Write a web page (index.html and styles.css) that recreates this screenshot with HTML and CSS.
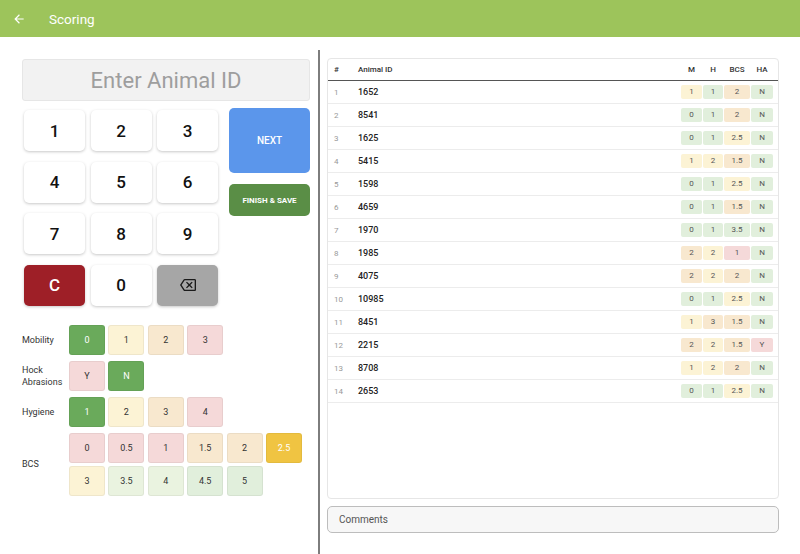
FILE: index.html
```html
<!DOCTYPE html>
<html lang="en">

<head>
    <meta charset="UTF-8">
    <meta name="viewport" content="width=device-width, initial-scale=1.0">
    <title>Scoring</title>
    <link rel="stylesheet" href="styles.css">
</head>

<body>
    <header class="appbar">
        <svg class="appbar-back" viewBox="0 0 24 24"><path d="M20 11H7.83l5.59-5.59L12 4l-8 8 8 8 1.41-1.41L7.83 13H20v-2z"/></svg>
        <span class="appbar-title">Scoring</span>
    </header>

    <div class="main">
        <!-- left : id entry + scores -->
        <section class="entry">
            <div class="id-input">Enter Animal ID</div>

            <div class="keypad">
                <div class="digits">
                    <button class="key">1</button>
                    <button class="key">2</button>
                    <button class="key">3</button>
                    <button class="key">4</button>
                    <button class="key">5</button>
                    <button class="key">6</button>
                    <button class="key">7</button>
                    <button class="key">8</button>
                    <button class="key">9</button>
                    <button class="key key-clear">C</button>
                    <button class="key">0</button>
                    <button class="key key-back">
                        <svg viewBox="0 0 24 24"><path d="M22 3H7c-.69 0-1.23.35-1.59.88L0 12l5.41 8.11c.36.53.9.89 1.59.89h15c1.1 0 2-.9 2-2V5c0-1.1-.9-2-2-2zm0 16H7.07L2.4 12l4.66-7H22v14zm-11.590-2L14 13.41 17.59 17 19 15.59 15.41 12 19 8.41 17.59 7 14 10.59 10.41 7 9 8.41 12.59 12 9 15.59z"/></svg>
                    </button>
                </div>
                <div class="actions">
                    <button class="btn-next">NEXT</button>
                    <button class="btn-finish">FINISH &amp; SAVE</button>
                </div>
            </div>

            <div class="scores">
                <div class="score-row">
                    <div class="score-label">Mobility</div>
                    <div class="opts">
                        <span class="opt sel-green">0</span>
                        <span class="opt c-yellow">1</span>
                        <span class="opt c-peach">2</span>
                        <span class="opt c-pink">3</span>
                    </div>
                </div>
                <div class="score-row">
                    <div class="score-label">Hock<br>Abrasions</div>
                    <div class="opts">
                        <span class="opt c-pink">Y</span>
                        <span class="opt sel-green">N</span>
                    </div>
                </div>
                <div class="score-row">
                    <div class="score-label">Hygiene</div>
                    <div class="opts">
                        <span class="opt sel-green">1</span>
                        <span class="opt c-yellow">2</span>
                        <span class="opt c-peach">3</span>
                        <span class="opt c-pink">4</span>
                    </div>
                </div>
                <div class="score-row">
                    <div class="score-label">BCS</div>
                    <div class="opts">
                        <span class="opt c-pink">0</span>
                        <span class="opt c-pink">0.5</span>
                        <span class="opt c-pink">1</span>
                        <span class="opt c-peach">1.5</span>
                        <span class="opt c-peach">2</span>
                        <span class="opt sel-gold">2.5</span>
                        <span class="opt c-yellow">3</span>
                        <span class="opt c-mint">3.5</span>
                        <span class="opt c-mint">4</span>
                        <span class="opt c-green">4.5</span>
                        <span class="opt c-green">5</span>
                    </div>
                </div>
            </div>
        </section>

        <!-- right : scored list -->
        <section class="list">
            <div class="table-card">
                <div class="trow thead">
                    <span>#</span>
                    <span>Animal ID</span>
                    <span class="tc">M</span>
                    <span class="tc">H</span>
                    <span class="tc">BCS</span>
                    <span class="tc">HA</span>
                </div>
                <div id="rows"></div>
            </div>
            <div class="comments">Comments</div>
        </section>
    </div>

    <script>
        var rowsElem = document.querySelector('#rows');

        // id, mobility, hygiene, bcs, hock abrasions
        var animals = [
            ['1652', 1, 1, 2, 'N'],
            ['8541', 0, 1, 2, 'N'],
            ['1625', 0, 1, 2.5, 'N'],
            ['5415', 1, 2, 1.5, 'N'],
            ['1598', 0, 1, 2.5, 'N'],
            ['4659', 0, 1, 1.5, 'N'],
            ['1970', 0, 1, 3.5, 'N'],
            ['1985', 2, 2, 1, 'N'],
            ['4075', 2, 2, 2, 'N'],
            ['10985', 0, 1, 2.5, 'N'],
            ['8451', 1, 3, 1.5, 'N'],
            ['2215', 2, 2, 1.5, 'Y'],
            ['8708', 1, 2, 2, 'N'],
            ['2653', 0, 1, 2.5, 'N']
        ];

        var mColor = ['c-green', 'c-yellow', 'c-peach', 'c-pink'];
        var hColor = ['', 'c-green', 'c-yellow', 'c-peach', 'c-pink'];

        function bcsColor(v) {
            if (v <= 1) return 'c-pink';
            if (v <= 2) return 'c-peach';
            if (v <= 3) return 'c-yellow';
            return 'c-green';
        }

        var html = '';
        animals.forEach(function (a, i) {
            html += '<div class="trow">'
                + '<span class="num">' + (i + 1) + '</span>'
                + '<span class="aid">' + a[0] + '</span>'
                + '<span class="chip ' + mColor[a[1]] + '">' + a[1] + '</span>'
                + '<span class="chip ' + hColor[a[2]] + '">' + a[2] + '</span>'
                + '<span class="chip ' + bcsColor(a[3]) + '">' + a[3] + '</span>'
                + '<span class="chip ' + (a[4] == 'Y' ? 'c-pink' : 'c-green') + '">' + a[4] + '</span>'
                + '</div>';
        });
        rowsElem.innerHTML = html;
    </script>
</body>

</html>
```

FILE: styles.css
```css
* {
    margin: 0;
    padding: 0;
    box-sizing: border-box;
}

body {
    width: 800px;
    height: 554px;
    overflow: hidden;
    font-family: Roboto, "Liberation Sans", sans-serif;
    color: #222;
    background: #fff;
}

button {
    font-family: inherit;
    border: none;
    cursor: pointer;
}

/* appbar */
.appbar {
    height: 37px;
    background: #9dc45b;
    display: flex;
    align-items: center;
    padding-left: 12px;
}

.appbar-back {
    width: 14px;
    height: 14px;
    fill: #fff;
}

.appbar-title {
    margin-left: 23px;
    font-size: 13.5px;
    color: #fff;
}

.main {
    display: flex;
    height: 517px;
    padding-top: 13px;
}

/* left panel */
.entry {
    width: 318px;
    padding: 9px 8px 0 22px;
}

.id-input {
    height: 42px;
    background: #f2f2f2;
    border: 1px solid #e6e6e6;
    border-radius: 3px;
    display: flex;
    align-items: center;
    justify-content: center;
    font-size: 22px;
    color: #9e9e9e;
}

.keypad {
    display: flex;
    margin-top: 7px;
}

.digits {
    display: grid;
    grid-template-columns: repeat(3, 61px);
    grid-auto-rows: 41px;
    column-gap: 5.5px;
    row-gap: 10.67px;
    padding: 2px;
}

.key {
    background: #fff;
    border-radius: 5px;
    box-shadow: 0 1px 3px rgba(0, 0, 0, 0.22);
    font-size: 17px;
    font-weight: 500;
    color: #111;
}

.key-clear {
    background: #9e1f27;
    color: #fff;
}

.key-back {
    background: #a6a6a6;
    display: flex;
    align-items: center;
    justify-content: center;
}

.key-back svg {
    width: 16px;
    height: 16px;
    fill: #1a1a1a;
}

.actions {
    width: 81px;
    margin-left: 9px;
    display: flex;
    flex-direction: column;
    gap: 11px;
}

.btn-next {
    height: 65px;
    background: #5b96eb;
    border-radius: 5px;
    color: #fff;
    font-size: 10px;
    font-weight: 500;
}

.btn-finish {
    height: 32px;
    background: #5a8e46;
    border-radius: 5px;
    color: #fff;
    font-size: 8px;
    font-weight: 700;
}

/* score buttons */
.scores {
    margin-top: 17px;
    display: flex;
    flex-direction: column;
    gap: 6px;
}

.score-row {
    display: flex;
    align-items: center;
}

.score-label {
    width: 47px;
    font-size: 9px;
    line-height: 12px;
    color: #333;
}

.opts {
    width: 240px;
    display: flex;
    flex-wrap: wrap;
    column-gap: 3.4px;
    row-gap: 3px;
}

.opt {
    width: 36px;
    height: 30px;
    border-radius: 3px;
    border: 1px solid rgba(0, 0, 0, 0.05);
    display: flex;
    align-items: center;
    justify-content: center;
    font-size: 9px;
    color: #333;
}

.sel-green {
    background: #6aaa5b;
    color: #fff;
}

.sel-gold {
    background: #f0c442;
    color: #fff;
}

.c-yellow { background: #fcf3d5; }
.c-peach { background: #f8e8cf; }
.c-pink { background: #f5d9d9; }
.c-mint { background: #eaf3e0; }
.c-green { background: #e1efdc; }

/* right panel */
.list {
    flex: 1;
    border-left: 2px solid #7d7d7d;
    padding: 8px 21px 21px 7px;
    display: flex;
    flex-direction: column;
    gap: 7px;
}

.table-card {
    flex: 1;
    border: 1px solid #e6e6e6;
    border-radius: 4px;
}

.trow {
    display: grid;
    grid-template-columns: 23px 1fr 21px 20px 26px 22px;
    column-gap: 1px;
    align-items: center;
    height: 23px;
    padding: 0 5px 0 6px;
    border-bottom: 1px solid #ececec;
    font-size: 8px;
}

.thead {
    height: 22px;
    border-bottom: 1px solid #555;
    color: #333;
    font-weight: 500;
}

.tc {
    text-align: center;
}

.num {
    color: #999;
}

.aid {
    font-size: 9px;
    font-weight: 500;
    color: #222;
}

.chip {
    height: 14px;
    line-height: 14px;
    border-radius: 2px;
    text-align: center;
    color: #555;
}

.comments {
    height: 27px;
    border: 1px solid #bdbdbd;
    border-radius: 5px;
    background: #f7f7f7;
    display: flex;
    align-items: center;
    padding-left: 11px;
    font-size: 10px;
    color: #555;
}
```
